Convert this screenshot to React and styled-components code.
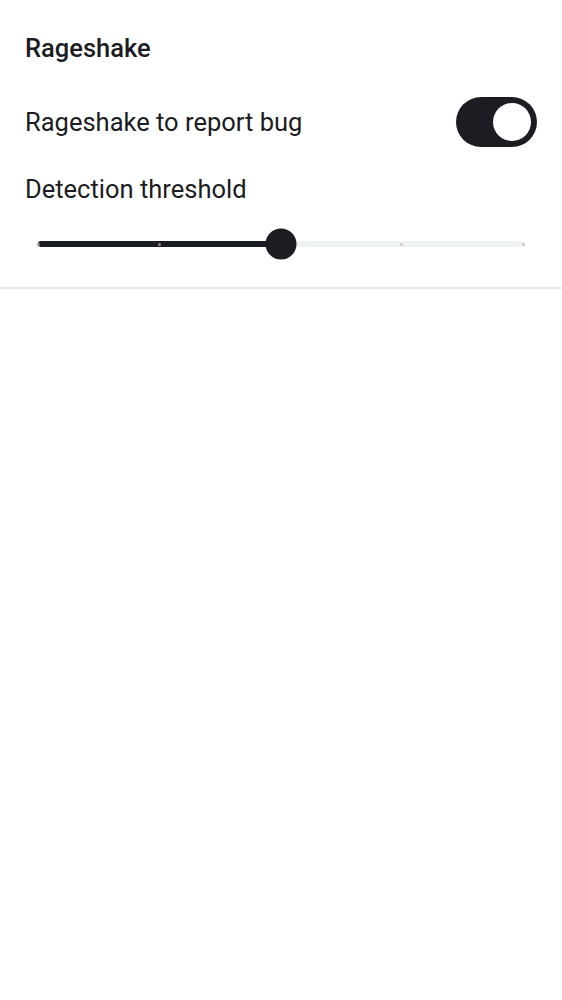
import React from 'react';
import styled, { createGlobalStyle } from 'styled-components';

const GlobalStyle = createGlobalStyle`
    body {
        margin: 0;
        background: #ffffff;
        font-family: Roboto, 'Noto Sans', sans-serif;
        color: #1b1d22;
    }
`;

const TICKS = [0, 0.25, 0.5, 0.75, 1];

function Slider({ value }) {
    return (
        <SliderWrapper>
            <Track>
                <ActiveTrack style={{ width: `${value * 100}%` }} />
                {TICKS.map((t) => (
                    <Tick key={t} $active={t <= value} style={{ left: `${t * 100}%` }} />
                ))}
                <Thumb style={{ left: `${value * 100}%` }} />
            </Track>
        </SliderWrapper>
    );
}

function App() {
    return (
        <>
            <GlobalStyle />
            <Section>
                <Title>Rageshake</Title>
                <Row>
                    <Label>Rageshake to report bug</Label>
                    <Toggle $on>
                        <Knob />
                    </Toggle>
                </Row>
                <SliderBlock>
                    <Label>Detection threshold</Label>
                    <Slider value={0.5} />
                </SliderBlock>
            </Section>
            <Divider />
        </>
    );
}

export default App;

const Section = styled.div`
    display: flex;
    flex-direction: column;
    padding: 34px 25px 0 25px;
`;

const Title = styled.h2`
    margin: 0;
    font-size: 25.5px;
    font-weight: 500;
    line-height: 28px;
`;

const Row = styled.div`
    display: flex;
    align-items: center;
    justify-content: space-between;
    margin-top: 35px;
`;

const Label = styled.span`
    font-size: 25.5px;
    line-height: 32px;
`;

const Toggle = styled.div`
    width: 81px;
    height: 50px;
    border-radius: 25px;
    background: ${(p) => (p.$on ? '#1b1d22' : '#e1e3e8')};
    display: flex;
    align-items: center;
    justify-content: ${(p) => (p.$on ? 'flex-end' : 'flex-start')};
    padding: 0 6px;
    box-sizing: border-box;
`;

const Knob = styled.div`
    width: 38px;
    height: 38px;
    border-radius: 50%;
    background: #ffffff;
`;

const SliderBlock = styled.div`
    display: flex;
    flex-direction: column;
    margin-top: 26px;
`;

const SliderWrapper = styled.div`
    padding: 36px 14px 0 13px;
    height: 46px;
`;

const Track = styled.div`
    position: relative;
    height: 6px;
    border-radius: 3px;
    background: #f0f1f4;
`;

const ActiveTrack = styled.div`
    position: absolute;
    left: 0;
    top: 0;
    bottom: 0;
    border-radius: 3px;
    background: #1b1d22;
`;

const Tick = styled.div`
    position: absolute;
    top: 1.5px;
    width: 3px;
    height: 3px;
    margin-left: -1.5px;
    border-radius: 50%;
    background: ${(p) => (p.$active ? '#8d9096' : '#c4c6cb')};
`;

const Thumb = styled.div`
    position: absolute;
    top: 50%;
    width: 31px;
    height: 31px;
    border-radius: 50%;
    background: #1b1d22;
    transform: translate(-50%, -50%);
`;

const Divider = styled.div`
    height: 2px;
    background: #ececee;
`;
